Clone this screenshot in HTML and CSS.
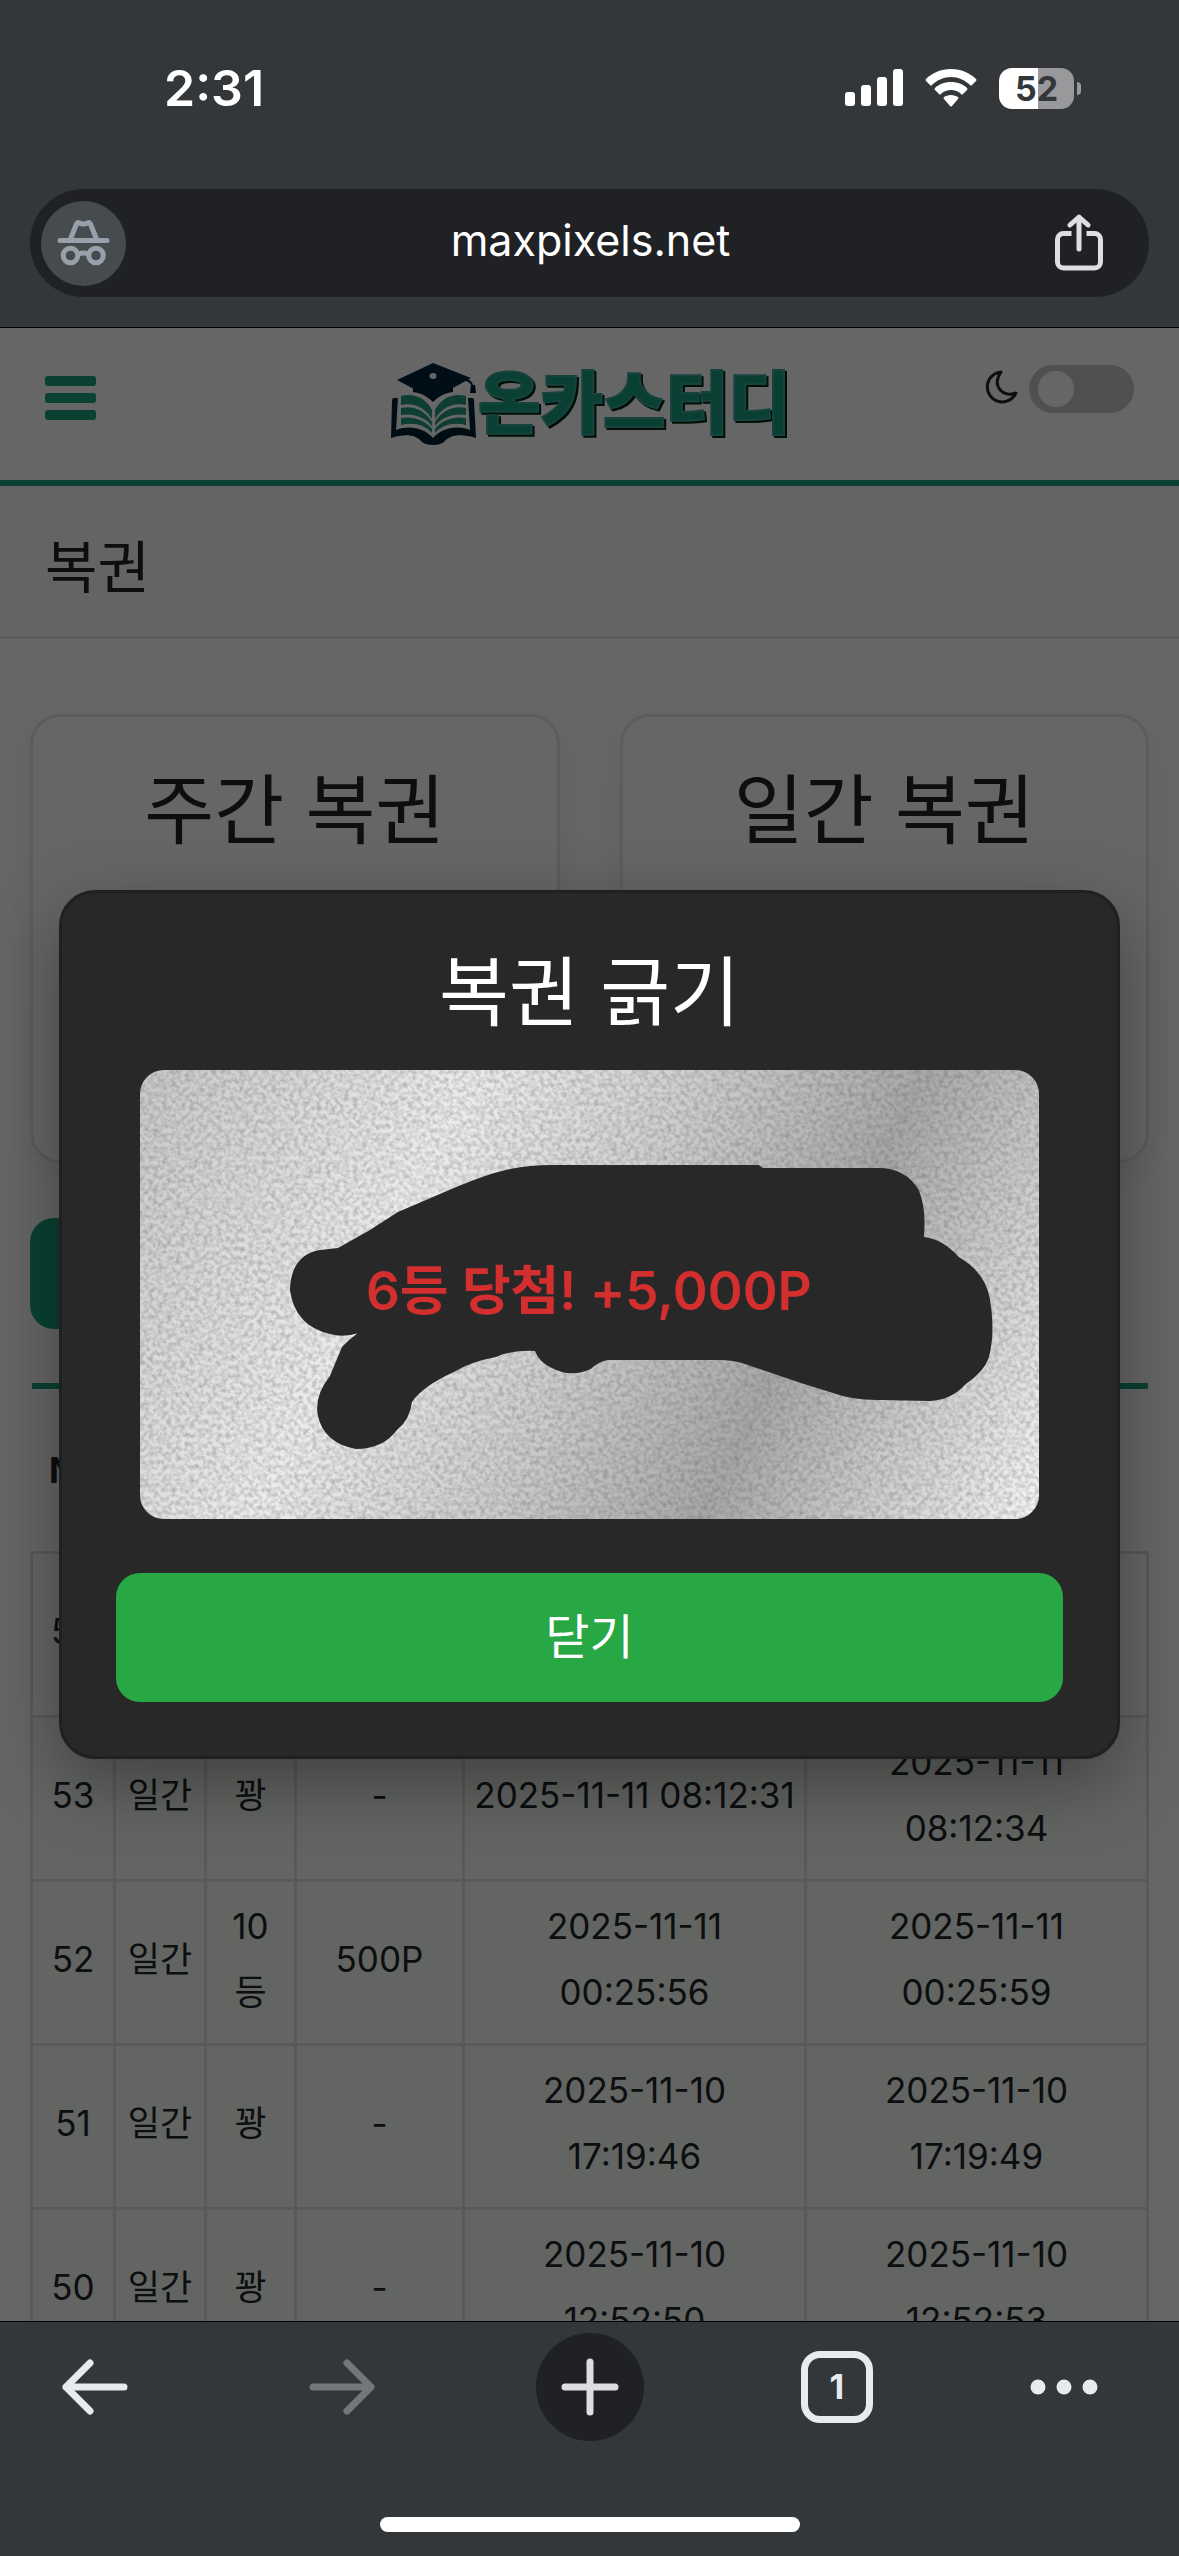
FILE: index.html
```html
<!DOCTYPE html>
<html lang="ko">
<head>
  <meta charset="UTF-8" />
  <meta name="viewport" content="width=device-width, initial-scale=1" />
  <title>복권</title>
  <link rel="stylesheet" href="styles.css">
</head>
<body>

<header class="browser-top">
  <div class="status-bar">
    <span class="clock">2:31</span>
    <div class="status-icons">
      <svg width="58" height="38" viewBox="0 0 58 38" fill="#fff">
        <rect x="0" y="23" width="10" height="14" rx="3"/>
        <rect x="16" y="16" width="10" height="21" rx="3"/>
        <rect x="32" y="8" width="10" height="29" rx="3"/>
        <rect x="48" y="0" width="10" height="37" rx="3"/>
      </svg>
      <svg width="52" height="38" viewBox="0 0 52 38" fill="#fff">
        <path d="M26 0C16 0 7 4 1 10q-1 1 0 2l4 4q1 1 2 0C12 11 19 8 26 8s14 3 19 8q1 1 2 0l4-4q1-1 0-2C45 4 36 0 26 0z"/>
        <path d="M26 13c-6 0-12 2-16 6q-1 1 0 2l4 4q1 1 2 0c3-3 6-4 10-4s7 1 10 4q1 1 2 0l4-4q1-1 0-2c-4-4-10-6-16-6z"/>
        <path d="M26 26c-3 0-5 1-7 2q-1 1 0 2l6 7q1 1 2 0l6-7q1-1 0-2c-2-1-4-2-7-2z"/>
      </svg>
      <div class="battery"><span>52</span></div>
    </div>
  </div>
  <div class="address-bar">
    <button class="incognito" aria-label="시크릿 모드">
      <svg width="85" height="85" viewBox="0 0 85 85" fill="none" stroke="#9aa0ab" stroke-width="5" stroke-linecap="round" stroke-linejoin="round">
        <path d="M19 39.500h47M29.500 38l6-15q1-2 3-1q4 2 8 0q2-1 3 1l6 15"/>
        <circle cx="29.500" cy="54.500" r="7.300"/>
        <circle cx="55" cy="54.500" r="7.300"/>
        <path d="M37.500 53q5-2 9.500 0"/>
      </svg>
    </button>
    <input type="text" class="url" value="maxpixels.net" aria-label="주소" readonly>
    <button class="share" aria-label="공유">
      <svg width="48" height="58" viewBox="0 0 48 58" fill="none" stroke="#dcdee3" stroke-width="5">
        <path d="M16.500 19.500H8.500a6 6 0 0 0-6 6V48a6 6 0 0 0 6 6h31a6 6 0 0 0 6-6V25.500a6 6 0 0 0-6-6H31.500"/>
        <path d="M24 35V3M15 11l9-8 9 8" stroke-linecap="round" stroke-linejoin="round"/>
      </svg>
    </button>
  </div>
</header>

<main class="viewport">
  <div class="site-header">
    <button class="hamburger" aria-label="메뉴"><i></i><i></i><i></i></button>
    <a class="logo" href="#" aria-label="온카스터디">
      <svg width="404" height="90" viewBox="0 0 404 90">
        <!-- 책 -->
        <g fill="#002233">
          <path d="M3 35h4L5 67c14-5 28-2 37 8 9-10 23-13 37-8L77 35h4q2 0 2 2l2 38c-14-4-25-4-32 4-4 4-18 4-22 0-7-8-17-8-31-4L1 38q0-3 2-3z"/>
        </g>
        <g fill="#249a7d">
          <path d="M10 33c12-3 24 1 31 14v9c-7-12-19-17-31-14z"/>
          <path d="M75 33c-12-3-24 1-31 14v9c7-12 19-17 31-14z"/>
          <path d="M10 45c12-3 24 2 31 14v4c-7-9-19-13-31-11z"/>
          <path d="M75 45c-12-3-24 2-31 14v4c7-9 19-13 31-11z"/>
          <path d="M10 55c12-2 24 2 31 11v4c-7-8-19-11-31-8z"/>
          <path d="M75 55c-12-2-24 2-31 11v4c7-8 19-11 31-8z"/>
        </g>
        <!-- 학사모 -->
        <path d="M22 21h40v8c-9 1-15 5-20 10-5-5-11-9-20-10z" fill="#001826"/>
        <path d="M42 0l38 15-38 21L6 17z" fill="#00243a"/>
        <path d="M74 17q8 0 8 12" fill="none" stroke="#00243a" stroke-width="2"/>
        <path d="M80 22h4l1 8h-6z" fill="#001826"/>
        <ellipse cx="42" cy="13" rx="3.500" ry="3" fill="#fff"/>
        <text class="logo-text" x="87" y="65">온카스터디</text>
      </svg>
    </a>
    <div class="theme-switch">
      <label for="darkMode" aria-label="다크 모드">
        <svg width="34" height="34" viewBox="0 0 34 34" fill="none" stroke="#212529" stroke-width="3" stroke-linejoin="round">
          <path d="M17 2A15 15 0 1 0 32 23C20 28 7 17 17 2z"/>
        </svg>
      </label>
      <input type="checkbox" id="darkMode">
    </div>
  </div>

  <h1 class="page-title">복권</h1>

  <div class="content">
    <div class="cards">
      <section class="card"><h2>주간 복권</h2></section>
      <section class="card"><h2>일간 복권</h2></section>
    </div>
    <button class="btn-history" aria-label="당첨 내역"></button>

    <table class="history">
      <colgroup>
        <col class="col-no"><col class="col-type"><col class="col-rank">
        <col class="col-prize"><col class="col-date"><col class="col-date">
      </colgroup>
      <thead>
        <tr><th>No</th><th>구분</th><th>등수</th><th>당첨</th><th>구매일</th><th>확인일</th></tr>
      </thead>
      <tbody>
        <tr><td>54</td><td>주간</td><td>-</td><td>-</td><td>-</td><td>-</td></tr>
        <tr><td>53</td><td>일간</td><td>꽝</td><td>-</td><td>2025-11-11 08:12:31</td><td>2025-11-11<br>08:12:34</td></tr>
        <tr><td>52</td><td>일간</td><td>10<br>등</td><td>500P</td><td>2025-11-11<br>00:25:56</td><td>2025-11-11<br>00:25:59</td></tr>
        <tr><td>51</td><td>일간</td><td>꽝</td><td>-</td><td>2025-11-10<br>17:19:46</td><td>2025-11-10<br>17:19:49</td></tr>
        <tr><td>50</td><td>일간</td><td>꽝</td><td>-</td><td>2025-11-10<br>12:52:50</td><td>2025-11-10<br>12:52:53</td></tr>
      </tbody>
    </table>
  </div>

  <div class="modal-overlay">
    <div class="modal" role="dialog" aria-labelledby="modalTitle">
      <h2 id="modalTitle">복권 긁기</h2>
      <svg class="scratch" viewBox="0 0 900 450">
        <defs>
          <linearGradient id="silver" gradientUnits="userSpaceOnUse" x1="0" y1="0" x2="900" y2="450">
            <stop offset="0" stop-color="#c8c8c8"/>
            <stop offset="0.300" stop-color="#ececec"/>
            <stop offset="0.500" stop-color="#cecece"/>
            <stop offset="0.700" stop-color="#a8a8a8"/>
            <stop offset="1" stop-color="#f6f6f6"/>
          </linearGradient>
          <filter id="grain" x="0" y="0" width="100%" height="100%" color-interpolation-filters="sRGB">
            <feTurbulence type="fractalNoise" baseFrequency="0.220" numOctaves="2" seed="7"/>
            <feColorMatrix values="0 0 0 0 0.300  0 0 0 0 0.300  0 0 0 0 0.300  0.650 0 0 0 -0.230"/>
          </filter>
        </defs>
        <rect width="900" height="450" fill="url(#silver)"/>
        <rect width="900" height="450" filter="url(#grain)"/>
        <!-- 긁힌 영역 -->
        <path fill="#282828" d="M150 220Q151 185 180 180L198 178L230 160L258 142L314 118Q350 103 370 99Q390 95 412 95L619 95L623 98L738 98Q766 98 779 120Q787 140 784 167Q803 169 819 187Q845 202 850 228Q856 262 849 288Q844 302 826 314Q812 330 790 331L742 330Q715 331 690 322L661 313L602 293Q592 290 580 290L468 290Q458 292 451 299Q431 308 412 298Q400 293 395 281Q372 280 356 287Q330 292 314 302Q283 316 272 332Q270 350 257 360Q243 379 216 379Q184 373 178 346Q174 326 190 306L202 277Q216 262 235 253L219 263Q203 268 190 264Q155 256 150 220z"/>
        <text class="prize" x="449" y="240" text-anchor="middle">6등 당첨! +5,000P</text>
      </svg>
      <button class="btn-close">닫기</button>
    </div>
  </div>
</main>

<nav class="toolbar">
  <div class="toolbar-buttons">
    <button aria-label="뒤로">
      <svg width="68" height="58" viewBox="0 0 68 58" fill="none" stroke="#e8eaed" stroke-width="7" stroke-linecap="round" stroke-linejoin="round"><path d="M63 29H5M29 5L5 29l24 24"/></svg>
    </button>
    <button aria-label="앞으로">
      <svg width="68" height="58" viewBox="0 0 68 58" fill="none" stroke="#747678" stroke-width="7" stroke-linecap="round" stroke-linejoin="round"><path d="M5 29h58M39 5l24 24-24 24"/></svg>
    </button>
    <button class="btn-new" aria-label="새 탭">
      <svg width="58" height="58" viewBox="0 0 58 58" fill="none" stroke="#dcdee3" stroke-width="7" stroke-linecap="round"><path d="M29 4v50M4 29h50"/></svg>
    </button>
    <button aria-label="탭"><span class="tab-count">1</span></button>
    <button class="btn-more" aria-label="더보기">
      <svg width="68" height="16" viewBox="0 0 68 16" fill="#e8eaed"><circle cx="8" cy="8" r="7.500"/><circle cx="34" cy="8" r="7.500"/><circle cx="60" cy="8" r="7.500"/></svg>
    </button>
  </div>
  <div class="home-indicator"></div>
</nav>

</body>
</html>
```
FILE: styles.css
```css
* {
  box-sizing: border-box;
}
body {
  margin: 0;
  height: 100vh;
  display: flex;
  flex-direction: column;
  overflow: hidden;
  font-family: Inter, "Noto Sans CJK KR", sans-serif;
  background: #33373a;
  color: #212529;
}
button {
  border: none;
  padding: 0;
  background: none;
  font-family: inherit;
  cursor: pointer;
}
svg {
  display: block;
}

/* 브라우저 상단 */
.browser-top {
  padding: 0 30px 30px;
  border-bottom: 1px solid #000;
}
.status-bar {
  display: flex;
  justify-content: space-between;
  align-items: center;
  height: 189px;
  padding: 0 68px 13px 134px;
}
.clock {
  color: #fff;
  font-size: 50px;
  font-weight: 600;
}
.status-icons {
  display: flex;
  align-items: center;
  gap: 22px;
}
.battery {
  position: relative;
  width: 75px;
  height: 41px;
  margin-right: 7px;
  border-radius: 13px;
  background: linear-gradient(90deg, #fff 52%, #99999b 52%);
  color: #33373a;
  font-size: 34px;
  font-weight: 700;
  line-height: 41px;
  text-align: center;
}
.battery::after {
  content: "";
  position: absolute;
  right: -7px;
  top: 14px;
  width: 4px;
  height: 13px;
  border-radius: 0 4px 4px 0;
  background: #99999b;
}
.address-bar {
  display: flex;
  align-items: center;
  justify-content: space-between;
  height: 108px;
  padding: 0 46px 0 11px;
  border-radius: 54px;
  background: #202124;
}
.incognito {
  border-radius: 50%;
  background: #464b4e;
}
.url {
  flex: 1;
  min-width: 0;
  padding: 0 0 6px;
  border: none;
  background: none;
  color: #fff;
  font-family: inherit;
  font-size: 43px;
  text-align: center;
}

/* 페이지 */
.viewport {
  position: relative;
  flex: 1;
  min-height: 0;
  overflow: hidden;
  background: #fff;
}
.site-header {
  display: flex;
  justify-content: space-between;
  height: 158px;
  padding: 35px 45px 0;
  border-bottom: 6px solid #1ba380;
}
.hamburger {
  display: flex;
  flex-direction: column;
  gap: 7px;
  width: 105px;
  margin: 13px 51px 0 0;
}
.hamburger i {
  width: 51px;
  height: 10px;
  border-radius: 3px;
  background: #1ba380;
}
.logo-text {
  font-family: "Noto Sans CJK KR", sans-serif;
  font-size: 68px;
  font-weight: 900;
  fill: #1a9f7f;
  stroke: #3aa59c;
  stroke-width: 2px;
  filter: drop-shadow(2px 2px 0 #002a12);
}
.theme-switch {
  display: flex;
  align-items: flex-start;
  gap: 11px;
}
.theme-switch label {
  padding-top: 7px;
}
.theme-switch input {
  appearance: none;
  width: 105px;
  height: 48px;
  margin: 2px 0 0;
  padding: 6px 9px;
  border-radius: 24px;
  background: #c8c8c8;
}
.theme-switch input::before {
  content: "";
  display: block;
  width: 36px;
  height: 36px;
  border-radius: 50%;
  background: #fff;
}
.theme-switch input:checked::before {
  margin-left: auto;
}
.page-title {
  margin: 0;
  padding: 14px 45px 0;
  border-bottom: 3px solid #e2e5e9;
  background: #fafafa;
  font-size: 57px;
  font-weight: 400;
  line-height: 136px;
}
.content {
  padding: 75px 30px 0;
}
.cards {
  display: grid;
  grid-template-columns: 1fr 1fr;
  gap: 60px;
}
.card {
  min-height: 449px;
  border: 3px solid #e6e6e6;
  border-radius: 30px;
  box-shadow: 0 12px 36px rgba(0,0,0,0.06);
}
.card h2 {
  margin: 34px 0 0;
  font-family: "Noto Sans CJK KR", sans-serif;
  font-size: 76px;
  font-weight: 400;
  line-height: 108px;
  text-align: center;
}
.btn-history {
  display: block;
  width: 330px;
  height: 111px;
  margin: 55px 0 54px;
  border-radius: 24px;
  background: #1ba380;
}
.history {
  width: 100%;
  border-collapse: collapse;
  table-layout: fixed;
  font-size: 35px;
  line-height: 66px;
  text-align: center;
}
.col-no { width: 83px; }
.col-type { width: 91px; }
.col-rank { width: 90px; }
.col-prize { width: 168px; }
.history th {
  height: 166px;
  padding: 0;
  border-top: 6px solid #1ba380;
  font-weight: 700;
}
.history td {
  height: 164px;
  padding: 11px 0 18px;
  border: 3px solid #dcdfe2;
}
.history tr:nth-child(n+2) td {
  background: #f5fcf5;
}

/* 모달 */
.modal-overlay {
  position: absolute;
  inset: 0;
  display: flex;
  justify-content: center;
  align-items: center;
  background: rgba(0,0,0,0.6);
}
.modal {
  width: 90%;
  padding: 40px 54px 54px;
  border: 3px solid #202020;
  border-radius: 36px;
  background: #282828;
  box-shadow: 0 24px 72px rgba(0,0,0,0.35);
}
.modal h2 {
  margin: 0 0 29px;
  color: #fff;
  font-family: "Noto Sans CJK KR", sans-serif;
  font-size: 76px;
  font-weight: 400;
  line-height: 108px;
  text-align: center;
}
.scratch {
  width: 95%;
  margin: 0 auto 54px;
  border-radius: 24px;
}
.prize {
  fill: #d32f2f;
  font-size: 53px;
  font-weight: 600;
}
.btn-close {
  width: 100%;
  height: 129px;
  padding-bottom: 10px;
  border-radius: 24px;
  background: #28a745;
  color: #fff;
  font-size: 48px;
}

/* 브라우저 하단 */
.toolbar {
  height: 235px;
  padding: 11px 41px 0;
  border-top: 1px solid #000;
}
.toolbar-buttons {
  display: flex;
  justify-content: space-between;
}
.toolbar button {
  display: flex;
  align-items: center;
  justify-content: center;
  width: 108px;
  height: 108px;
}
.toolbar .btn-new {
  border-radius: 50%;
  background: #202124;
}
.toolbar .btn-more {
  justify-content: flex-start;
}
.tab-count {
  width: 72px;
  height: 72px;
  border: 7px solid #e8eaed;
  border-radius: 19px;
  color: #e8eaed;
  font-size: 34px;
  font-weight: 700;
  line-height: 58px;
}
.home-indicator {
  width: 420px;
  height: 15px;
  margin: 76px auto 0;
  border-radius: 8px;
  background: #fff;
}
```
